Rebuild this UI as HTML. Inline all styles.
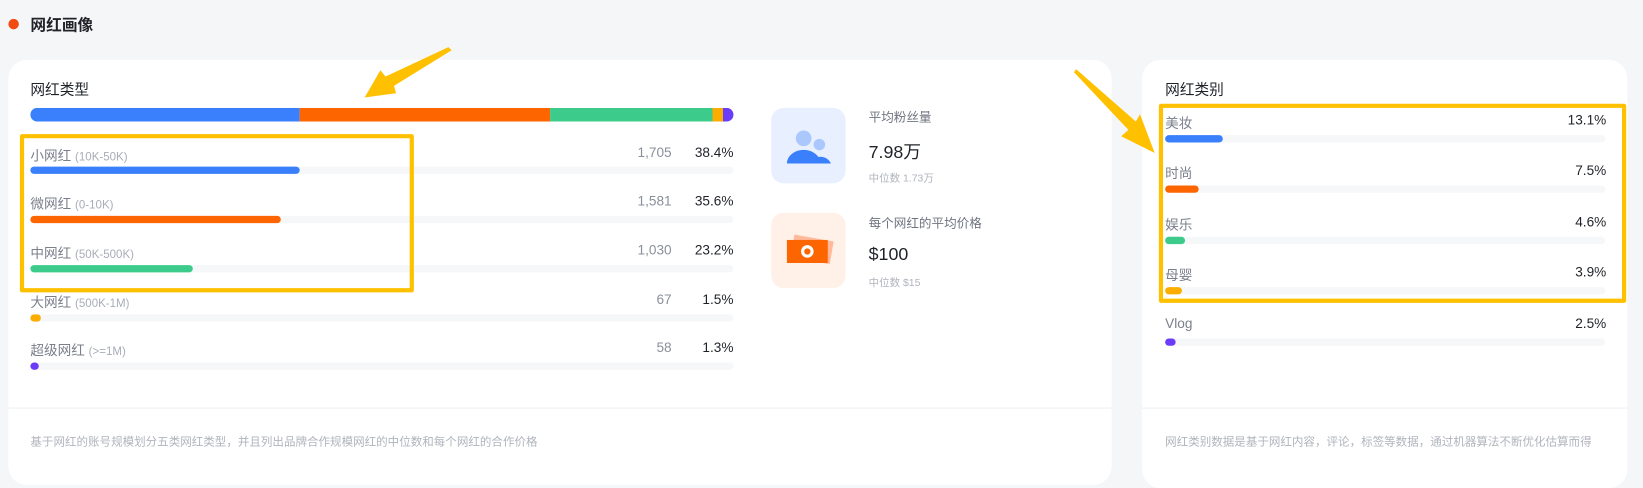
<!DOCTYPE html>
<html><head><meta charset="utf-8"><style>
*{margin:0;padding:0;box-sizing:border-box}
body{width:1643px;height:466px;background:#f5f6f8;position:relative;overflow:hidden;font-family:"Liberation Sans","Noto Sans CJK SC",sans-serif;}
#w{position:absolute;left:0;top:0;width:1568px;height:445px;transform:scale(1.0478);transform-origin:0 0}
.a{position:absolute;white-space:nowrap}
.card{position:absolute;background:#fff;border-radius:18px}
.lbl{font-size:13px;color:#7a7f8c}
.lbl small{font-size:11px;color:#a9adb8}
.num{font-size:13px;color:#8a8f9a;text-align:right}
.pct{font-size:13px;color:#1f2329;text-align:right}
.trk{position:absolute;height:7px;background:#f6f7f9;border-radius:4px}
.bar{position:absolute;height:7px;border-radius:4px}
.foot{font-size:11px;color:#b0b4bc}
</style></head><body><div id="w">
<div class="a" style="left:8px;top:18px;width:10px;height:10px;border-radius:50%;background:#f24a0f"></div>
<div class="a" style="left:29px;top:13px;font-size:15px;font-weight:bold;color:#1f2329">网红画像</div>

<div class="card" style="left:8px;top:57px;width:1053px;height:406px"></div>
<div class="card" style="left:1090px;top:57px;width:463px;height:409px"></div>
<div class="a" style="left:8px;top:389px;width:1053px;height:1px;background:#eeeff2"></div>
<div class="a" style="left:1090px;top:389px;width:463px;height:1px;background:#eeeff2"></div>

<div class="a" style="left:29px;top:75px;font-size:14px;color:#1f2329">网红类型</div>
<div class="a" style="left:29px;top:103px;width:671px;height:13px;border-radius:7px;overflow:hidden;display:flex">
<div style="width:257px;background:#3a7ffb"></div><div style="width:239px;background:#fd6500"></div><div style="width:155px;background:#3ccb8a"></div><div style="width:10px;background:#fcad00"></div><div style="width:10px;background:#6a3cfa"></div></div>

<div class="a lbl" style="left:29px;top:138px">小网红 <small>(10K-50K)</small></div>
<div class="a num" style="left:580px;top:138px;width:61px">1,705</div>
<div class="a pct" style="left:640px;top:138px;width:60px">38.4%</div>
<div class="trk" style="left:29px;top:159px;width:671px"></div><div class="bar" style="left:29px;top:159px;width:257px;background:#3a7ffb"></div>

<div class="a lbl" style="left:29px;top:184px">微网红 <small>(0-10K)</small></div>
<div class="a num" style="left:580px;top:184px;width:61px">1,581</div>
<div class="a pct" style="left:640px;top:184px;width:60px">35.6%</div>
<div class="trk" style="left:29px;top:206px;width:671px"></div><div class="bar" style="left:29px;top:206px;width:239px;background:#fd6500"></div>

<div class="a lbl" style="left:29px;top:231px">中网红 <small>(50K-500K)</small></div>
<div class="a num" style="left:580px;top:231px;width:61px">1,030</div>
<div class="a pct" style="left:640px;top:231px;width:60px">23.2%</div>
<div class="trk" style="left:29px;top:253px;width:671px"></div><div class="bar" style="left:29px;top:253px;width:155px;background:#3ccb8a"></div>

<div class="a lbl" style="left:29px;top:278px">大网红 <small>(500K-1M)</small></div>
<div class="a num" style="left:580px;top:278px;width:61px">67</div>
<div class="a pct" style="left:640px;top:278px;width:60px">1.5%</div>
<div class="trk" style="left:29px;top:300px;width:671px"></div><div class="bar" style="left:29px;top:300px;width:10px;background:#fcad00"></div>

<div class="a lbl" style="left:29px;top:324px">超级网红 <small>(&gt;=1M)</small></div>
<div class="a num" style="left:580px;top:324px;width:61px">58</div>
<div class="a pct" style="left:640px;top:324px;width:60px">1.3%</div>
<div class="trk" style="left:29px;top:346px;width:671px"></div><div class="bar" style="left:29px;top:346px;width:8px;background:#6a3cfa"></div>

<div class="a" style="left:736px;top:103px;width:71px;height:72px;border-radius:12px;background:#e8f0ff">
<svg width="71" height="72" viewBox="0 0 71 72"><circle cx="31" cy="29" r="7.5" fill="#aac8fd"/><circle cx="46" cy="35" r="5.5" fill="#aac8fd"/><path d="M37 53a11 11 0 0 1 20 0z" fill="#3a7ffb"/><path d="M15 53a16 13 0 0 1 32 0z" fill="#3a7ffb"/></svg></div>
<div class="a" style="left:829px;top:103px;font-size:12px;color:#6f7480">平均粉丝量</div>
<div class="a" style="left:829px;top:131px;font-size:17px;color:#1f2329">7.98万</div>
<div class="a" style="left:829px;top:161px;font-size:10px;color:#b0b4bc">中位数 1.73万</div>

<div class="a" style="left:736px;top:203px;width:71px;height:72px;border-radius:12px;background:#fff1e8">
<svg width="71" height="72" viewBox="0 0 71 72"><rect x="20" y="24" width="38" height="22" fill="#ffb899" transform="rotate(10 39 35)"/><rect x="15" y="26" width="39" height="22" fill="#fd6500"/><circle cx="34.5" cy="37" r="6" fill="#fff"/><circle cx="34.5" cy="37" r="3" fill="#fd6500"/></svg></div>
<div class="a" style="left:829px;top:204px;font-size:12px;color:#6f7480">每个网红的平均价格</div>
<div class="a" style="left:829px;top:233px;font-size:17px;color:#1f2329">$100</div>
<div class="a" style="left:829px;top:261px;font-size:10px;color:#b0b4bc">中位数 $15</div>

<div class="a foot" style="left:29px;top:413px">基于网红的账号规模划分五类网红类型，并且列出品牌合作规模网红的中位数和每个网红的合作价格</div>

<div class="a" style="left:1112px;top:75px;font-size:14px;color:#1f2329">网红类别</div>
<div class="a lbl" style="left:1112px;top:107px">美妆</div><div class="a pct" style="left:1450px;top:107px;width:83px">13.1%</div>
<div class="trk" style="left:1112px;top:129px;width:420px"></div><div class="bar" style="left:1112px;top:129px;width:55px;background:#3a7ffb"></div>
<div class="a lbl" style="left:1112px;top:155px">时尚</div><div class="a pct" style="left:1450px;top:155px;width:83px">7.5%</div>
<div class="trk" style="left:1112px;top:177px;width:420px"></div><div class="bar" style="left:1112px;top:177px;width:32px;background:#fd6500"></div>
<div class="a lbl" style="left:1112px;top:204px">娱乐</div><div class="a pct" style="left:1450px;top:204px;width:83px">4.6%</div>
<div class="trk" style="left:1112px;top:226px;width:420px"></div><div class="bar" style="left:1112px;top:226px;width:19px;background:#3ccb8a"></div>
<div class="a lbl" style="left:1112px;top:252px">母婴</div><div class="a pct" style="left:1450px;top:252px;width:83px">3.9%</div>
<div class="trk" style="left:1112px;top:274px;width:420px"></div><div class="bar" style="left:1112px;top:274px;width:16px;background:#fcad00"></div>
<div class="a lbl" style="left:1112px;top:301px">Vlog</div><div class="a pct" style="left:1450px;top:301px;width:83px">2.5%</div>
<div class="trk" style="left:1112px;top:323px;width:420px"></div><div class="bar" style="left:1112px;top:323px;width:10px;background:#6a3cfa"></div>
<div class="a foot" style="left:1112px;top:413px">网红类别数据是基于网红内容，评论，标签等数据，通过机器算法不断优化估算而得</div>

<div class="a" style="left:19px;top:128px;width:376px;height:151px;border:4px solid #ffc000;border-radius:2px"></div>
<div class="a" style="left:1106px;top:99px;width:446px;height:190px;border:4px solid #ffc000;border-radius:2px"></div>
<svg class="a" style="left:0;top:0" width="1568" height="445"><polygon points="431,48 376,82 378,89 348,93 363,67 368,73 428,45" fill="#ffc000"/><polygon points="1027,66 1084,116 1088,109 1102,146 1070,130 1077,124 1025,69" fill="#ffc000"/></svg>
</div></body></html>
